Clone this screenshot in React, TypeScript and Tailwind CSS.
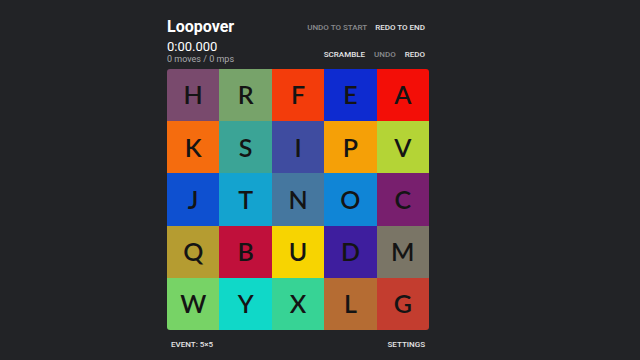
const tiles: { l: string; c: string }[] = [
  { l: 'H', c: 'bg-[#794a6d]' },
  { l: 'R', c: 'bg-[#77a36a]' },
  { l: 'F', c: 'bg-[#f33c0b]' },
  { l: 'E', c: 'bg-[#0e2bd0]' },
  { l: 'A', c: 'bg-[#f30e07]' },
  { l: 'K', c: 'bg-[#f56c0e]' },
  { l: 'S', c: 'bg-[#3ba496]' },
  { l: 'I', c: 'bg-[#3f4ca0]' },
  { l: 'P', c: 'bg-[#f5a007]' },
  { l: 'V', c: 'bg-[#b4d436]' },
  { l: 'J', c: 'bg-[#0e50d0]' },
  { l: 'T', c: 'bg-[#14a3cf]' },
  { l: 'N', c: 'bg-[#45779f]' },
  { l: 'O', c: 'bg-[#1085d6]' },
  { l: 'C', c: 'bg-[#781f6e]' },
  { l: 'Q', c: 'bg-[#b59c31]' },
  { l: 'B', c: 'bg-[#c0103b]' },
  { l: 'U', c: 'bg-[#f7d401]' },
  { l: 'D', c: 'bg-[#3e1e9e]' },
  { l: 'M', c: 'bg-[#7a7566]' },
  { l: 'W', c: 'bg-[#77d366]' },
  { l: 'Y', c: 'bg-[#10d8c8]' },
  { l: 'X', c: 'bg-[#37d395]' },
  { l: 'L', c: 'bg-[#b56c33]' },
  { l: 'G', c: 'bg-[#c33d2f]' },
];

export default function App() {
  return (
    <div className="h-[360px] w-[640px] overflow-hidden bg-[#222326] font-['Roboto',sans-serif] text-white">
      <div className="ml-[167px] flex w-[262px] flex-col pt-[16px]">
        {/* header */}
        <div className="flex items-start justify-between pr-[4px]">
          <h1 className="text-[16px] font-bold leading-[21px]">Loopover</h1>
          <div className="mt-[6px] flex gap-[8px] text-[8px] font-medium uppercase">
            <span className="text-[#8a8b8e]">Undo to start</span>
            <span className="text-[#e6e6e6]">Redo to end</span>
          </div>
        </div>
        <div className="mt-[2px] flex items-end justify-between pr-[4px]">
          <div>
            <div className="text-[13px] leading-[15px]">0:00.000</div>
            <div className="text-[9px] leading-[11px] text-[#a9aaad]">0 moves / 0 mps</div>
          </div>
          <div className="mb-[4px] flex gap-[9px] text-[8px] font-medium uppercase">
            <span className="text-[#e6e6e6]">Scramble</span>
            <span className="text-[#8a8b8e]">Undo</span>
            <span className="text-[#e6e6e6]">Redo</span>
          </div>
        </div>

        {/* board */}
        <div className="mt-[4px] grid h-[261px] grid-cols-5 grid-rows-5 overflow-hidden rounded-[3px]">
          {tiles.map((t) => (
            <div
              key={t.l}
              className={`flex items-center justify-center font-['Lato',sans-serif] text-[25px] font-semibold text-[#141414] ${t.c}`}
            >
              {t.l}
            </div>
          ))}
        </div>

        {/* footer */}
        <div className="mt-[9px] flex justify-between px-[4px] text-[8px] font-medium uppercase text-[#e6e6e6]">
          <span>Event: 5×5</span>
          <span>Settings</span>
        </div>
      </div>
    </div>
  );
}
